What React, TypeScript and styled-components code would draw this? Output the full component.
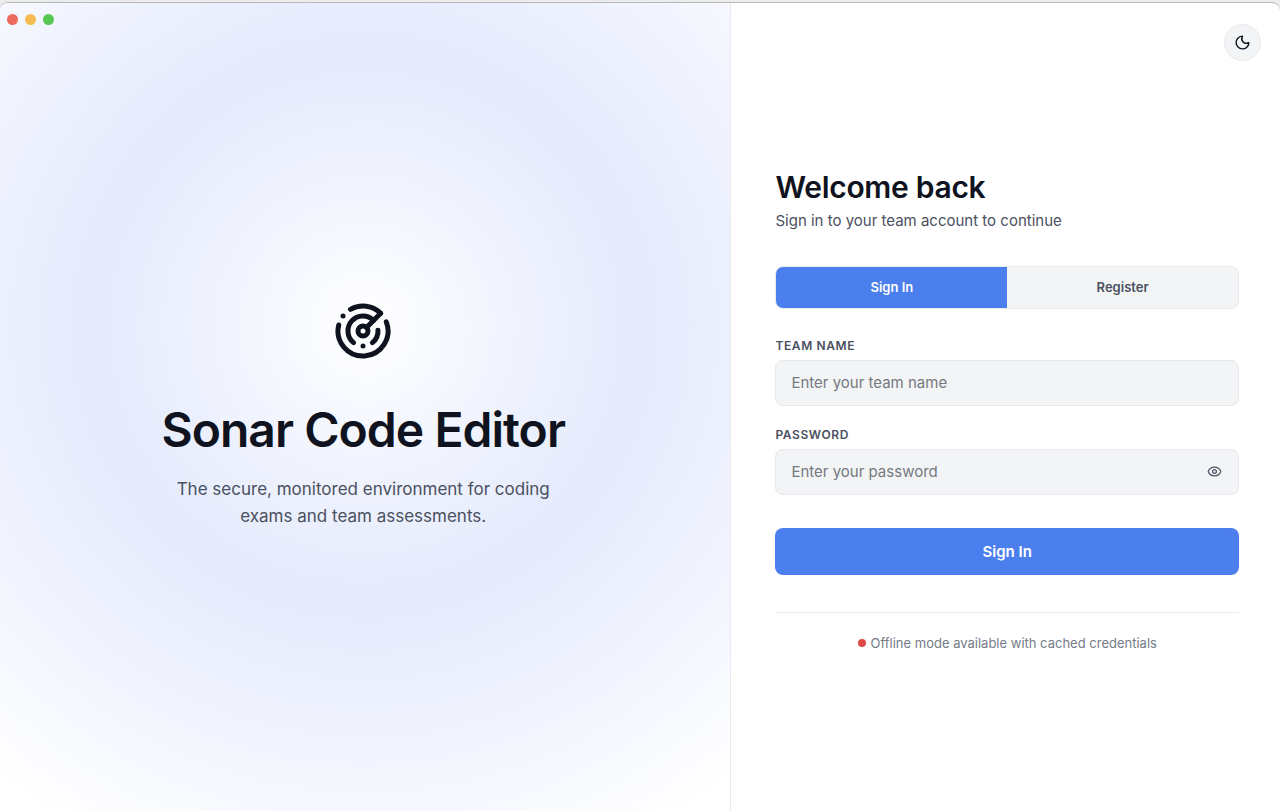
import React, { useState } from "react";
import styled, { createGlobalStyle } from "styled-components";
import { Eye, Moon, Radar } from "lucide-react";

const GlobalStyle = createGlobalStyle`
  *, *::before, *::after { box-sizing: border-box; }
  html, body, #root { height: 100%; }
  body {
    margin: 0;
    background: #ececec;
    color: #0f1320;
    font-family: Inter, "Liberation Sans", sans-serif;
  }
  button, input { font-family: inherit; }
  h1, h2, p { margin: 0; }
`;

const Backdrop = styled.div`
  min-height: 100%;
  padding-top: 2px;
  display: flex;
`;

const AppWindow = styled.div`
  position: relative;
  flex: 1;
  display: grid;
  grid-template-columns: 4fr 3fr;
  border-top: 1px solid #b9b9bb;
  border-radius: 8px 8px 0 0;
  background: #ffffff;
  overflow: hidden;
`;

const TrafficLights = styled.div`
  position: absolute;
  top: 11px;
  left: 7px;
  display: flex;
  gap: 7px;
`;

const Light = styled.span<{ $color: string }>`
  width: 11px;
  height: 11px;
  border-radius: 50%;
  background: ${(p) => p.$color};
`;

const Hero = styled.section`
  display: flex;
  flex-direction: column;
  align-items: center;
  justify-content: center;
  padding: 16px 44px 0 40px;
  border-right: 1px solid #e8eaee;
  text-align: center;
  background: radial-gradient(circle at 50% 40%, #ffffff 0%, #e4eafd 45%, #ffffff 96%);
`;

const Logo = styled.div`
  display: flex;
  margin-bottom: 40px;
`;

const Title = styled.h1`
  font-size: 48px;
  font-weight: 600;
  line-height: 58px;
  letter-spacing: -0.02em;
`;

const Tagline = styled.p`
  max-width: 400px;
  margin-top: 17px;
  font-size: 17px;
  line-height: 27px;
  color: #4a5060;
`;

const Panel = styled.main`
  position: relative;
  display: flex;
  flex-direction: column;
  justify-content: center;
  padding: 7px 41px 0 44px;
`;

const ThemeButton = styled.button`
  position: absolute;
  top: 21px;
  right: 19px;
  display: grid;
  place-items: center;
  width: 37px;
  height: 37px;
  padding: 0;
  border: 1px solid #e8eaed;
  border-radius: 50%;
  background: #f2f4f6;
  color: #0f1320;
`;

const Heading = styled.h2`
  font-size: 30px;
  font-weight: 600;
  line-height: 36px;
  letter-spacing: -0.01em;
`;

const Subheading = styled.p`
  margin-top: 4px;
  font-size: 15px;
  line-height: 24px;
  color: #4a5060;
`;

const Tabs = styled.div`
  display: grid;
  grid-template-columns: 1fr 1fr;
  margin-top: 33px;
  border: 1px solid #e8eaed;
  border-radius: 8px;
  background: #f2f4f6;
  overflow: hidden;
`;

const Tab = styled.button<{ $active: boolean }>`
  height: 41px;
  padding: 0;
  border: 0;
  font-size: 13px;
  font-weight: 600;
  background: ${(p) => (p.$active ? "#4c7fee" : "transparent")};
  color: ${(p) => (p.$active ? "#ffffff" : "#4a5060")};
`;

const Form = styled.form`
  display: flex;
  flex-direction: column;
  margin-top: 28px;
`;

const Field = styled.div`
  margin-bottom: 20px;
`;

const Label = styled.label`
  display: block;
  margin-bottom: 6px;
  font-size: 12px;
  font-weight: 600;
  line-height: 17px;
  letter-spacing: 0.05em;
  text-transform: uppercase;
  color: #4a5060;
`;

const InputBox = styled.div`
  display: flex;
  align-items: center;
  height: 46px;
  border: 1px solid #e6e8eb;
  border-radius: 8px;
  background: #f2f4f6;
`;

const Input = styled.input`
  flex: 1;
  min-width: 0;
  height: 100%;
  padding: 0 15px;
  border: 0;
  outline: 0;
  background: transparent;
  font-size: 15px;
  color: #0f1320;
  &::placeholder { color: #757980; opacity: 1; }
`;

const RevealButton = styled.button`
  display: flex;
  margin-right: 16px;
  padding: 0;
  border: 0;
  background: transparent;
  color: #4a5060;
`;

const Submit = styled.button`
  height: 47px;
  margin-top: 13px;
  border: 0;
  border-radius: 8px;
  background: #4c7fee;
  color: #ffffff;
  font-size: 15px;
  font-weight: 600;
`;

const Footer = styled.footer`
  display: flex;
  align-items: center;
  justify-content: center;
  gap: 5px;
  margin-top: 37px;
  padding-top: 20px;
  border-top: 1px solid #e8eaed;
  font-size: 13px;
  line-height: 20px;
  color: #757b88;
`;

const StatusDot = styled.span`
  width: 8px;
  height: 8px;
  border-radius: 50%;
  background: #dc4a48;
`;

export default function App() {
  const [mode, setMode] = useState<"signin" | "register">("signin");
  const [visible, setVisible] = useState(false);

  return (
    <>
      <GlobalStyle />
      <Backdrop>
        <AppWindow>
          <Hero>
            <Logo>
              <Radar size={60} strokeWidth={2} aria-hidden="true" />
            </Logo>
            <Title>Sonar Code Editor</Title>
            <Tagline>The secure, monitored environment for coding exams and team assessments.</Tagline>
          </Hero>
          <Panel>
            <Heading>Welcome back</Heading>
            <Subheading>Sign in to your team account to continue</Subheading>
            <Tabs>
              <Tab type="button" $active={mode === "signin"} onClick={() => setMode("signin")}>
                Sign In
              </Tab>
              <Tab type="button" $active={mode === "register"} onClick={() => setMode("register")}>
                Register
              </Tab>
            </Tabs>
            <Form onSubmit={(e) => e.preventDefault()}>
              <Field>
                <Label htmlFor="team">Team name</Label>
                <InputBox>
                  <Input id="team" type="text" placeholder="Enter your team name" />
                </InputBox>
              </Field>
              <Field>
                <Label htmlFor="password">Password</Label>
                <InputBox>
                  <Input
                    id="password"
                    type={visible ? "text" : "password"}
                    placeholder="Enter your password"
                  />
                  <RevealButton
                    type="button"
                    aria-label="Show password"
                    onClick={() => setVisible(!visible)}
                  >
                    <Eye size={15} strokeWidth={2} />
                  </RevealButton>
                </InputBox>
              </Field>
              <Submit type="submit">Sign In</Submit>
            </Form>
            <Footer>
              <StatusDot />
              <span>Offline mode available with cached credentials</span>
            </Footer>
            <ThemeButton type="button" aria-label="Toggle theme">
              <Moon size={17} strokeWidth={2} />
            </ThemeButton>
          </Panel>
          <TrafficLights>
            <Light $color="#ed6a5f" />
            <Light $color="#f5bd4f" />
            <Light $color="#58c653" />
          </TrafficLights>
        </AppWindow>
      </Backdrop>
    </>
  );
}
